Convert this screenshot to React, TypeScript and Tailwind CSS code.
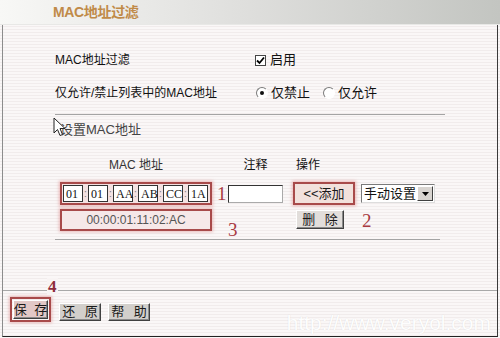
import type { ReactNode } from 'react';

const sans = "font-['Liberation_Sans','Noto_Sans_CJK_SC',sans-serif]";

function Btn({ children, className = '' }: { children: ReactNode; className?: string }) {
  return (
    <div
      className={`flex items-center justify-center whitespace-nowrap bg-[#d2cfcb] border border-t-white border-l-white border-r-[#404040] border-b-[#404040] shadow-[inset_-1px_-1px_0_#8a8a8a] text-[13px] text-[#1a1a1a] ${className}`}
    >
      {children}
    </div>
  );
}

function Radio({ checked }: { checked?: boolean }) {
  return (
    <div className="w-[12px] h-[12px] rounded-full bg-white border border-t-[#7a7a7a] border-l-[#7a7a7a] border-r-white border-b-white flex items-center justify-center">
      {checked && <div className="w-[4px] h-[4px] rounded-full bg-[#111]" />}
    </div>
  );
}

function Num({ n, className = '' }: { n: string; className?: string }) {
  return (
    <span className={`font-['Liberation_Serif',serif] text-[19px] leading-none text-[#a83a42] ${className}`}>{n}</span>
  );
}

const macParts = ['01', '01', 'AA', 'AB', 'CC', '1A'];

export default function App() {
  return (
    <div
      className={`w-[500px] h-[338px] overflow-hidden bg-[repeating-linear-gradient(180deg,#faf7f7_0px,#faf7f7_2px,#f1ecec_2px,#f1ecec_3px)] ${sans}`}
    >
      {/* Title bar */}
      <div className="h-[25px] flex items-center pl-[53px] bg-linear-to-r from-[#f8f8f6] via-[#dededc] to-[#c3c5c1] border-b border-[#e8e8e6]">
        <span className="text-[14px] font-bold text-[#c08a48] tracking-tight">MAC地址过滤</span>
      </div>

      {/* Body */}
      <div className="relative flex flex-col h-[312px] mx-[2px] border-l border-l-[#8c8c8c] border-r border-r-[#3a3a3a] border-b border-b-[#222] text-[12px] text-[#111]">
        {/* Row 1 */}
        <div className="mt-[25px] h-[20px] pl-[52px] flex items-center">
          <span className="w-[200px]">MAC地址过滤</span>
          <div className="w-[11px] h-[11px] bg-white border border-[#444] flex items-center justify-center">
            <svg width="9" height="9" viewBox="0 0 9 9">
              <path d="M1 4.5 L3.5 7 L8 1.5" fill="none" stroke="#000" strokeWidth="1.8" />
            </svg>
          </div>
          <span className="ml-[4px] text-[13px]">启用</span>
        </div>

        {/* Row 2 */}
        <div className="mt-[13px] h-[20px] pl-[52px] flex items-center">
          <span className="w-[201px]">仅允许/禁止列表中的MAC地址</span>
          <Radio checked />
          <span className="ml-[3px] text-[13px] w-[52px]">仅禁止</span>
          <Radio />
          <span className="ml-[3px] text-[13px]">仅允许</span>
        </div>

        <div className="mt-[11px] ml-[52px] w-[390px] h-px bg-[#a4a4a4]" />

        {/* Row 3 */}
        <div className="mt-[5px] h-[20px] pl-[57px] flex items-center text-[13px] text-[#444]">设置MAC地址</div>
        <svg className="absolute left-[50px] top-[92px]" width="13" height="20" viewBox="0 0 13 20">
          <path d="M1 1 L1 16 L4.5 12.5 L7 18.5 L9.5 17.5 L7 11.5 L12 11.5 Z" fill="#fff" stroke="#222" strokeWidth="1" />
        </svg>

        {/* Column headers */}
        <div className="mt-[17px] h-[16px] pl-[57px] flex items-center text-[12px]">
          <span className="w-[152px] text-center text-[#333]">MAC 地址</span>
          <span className="w-[16px]" />
          <span className="w-[55px] text-center">注释</span>
          <span className="ml-[13px]">操作</span>
        </div>

        {/* MAC input row */}
        <div className="mt-[9px] h-[23px] pl-[57px] flex items-center">
          <div className="w-[152px] h-[23px] border-2 border-[#a84a4a] bg-[#f4e2e2] shadow-[0_0_3px_1px_rgba(220,130,130,0.55)] flex items-center pl-[1px]">
            {macParts.map((p, i) => (
              <div key={i} className="flex items-center">
                {i > 0 && <span className="w-[5px] text-center text-[10px] text-[#777] leading-none">:</span>}
                <div className="w-[20px] h-[17px] bg-white border border-[#333] pl-[2px] flex items-center font-['Liberation_Serif',serif] text-[12px] text-[#111]">
                  {p}
                </div>
              </div>
            ))}
          </div>
          <Num n="1" className="ml-[5px] w-[11px]" />
          <div className="w-[55px] h-[18px] bg-white border border-[#333] border-b-[#aaa] border-r-[#aaa]" />
          <div className="ml-[10px] w-[62px] h-[23px] border-2 border-[#a84a4a] shadow-[0_0_3px_1px_rgba(220,130,130,0.55)] bg-[#f2e1dc] flex items-center justify-center text-[13px] text-[#1a1a1a]">
            &lt;&lt;添加
          </div>
          <div className="ml-[6px] w-[74px] h-[19px] bg-white border border-t-[#7a7a7a] border-l-[#7a7a7a] border-r-[#ddd] border-b-[#ddd] flex items-center">
            <span className="flex-1 pl-[2px] text-[13px] leading-none">手动设置</span>
            <div className="w-[16px] h-[15px] mr-px bg-[#d8d4d0] border border-t-white border-l-white border-r-[#404040] border-b-[#404040] flex items-center justify-center">
              <svg width="7" height="4" viewBox="0 0 7 4">
                <path d="M0 0 L7 0 L3.5 4 Z" fill="#000" />
              </svg>
            </div>
          </div>
        </div>

        {/* Result row */}
        <div className="mt-[4px] h-[22px] pl-[57px] flex items-start">
          <div className="w-[152px] h-[22px] border-2 border-[#a84a4a] bg-[#f6e8e8] shadow-[0_0_3px_1px_rgba(220,130,130,0.5)] flex items-center justify-center text-[12px] text-[#555]">
            00:00:01:11:02:AC
          </div>
          <Num n="3" className="ml-[16px] mt-[11px] w-[8px]" />
          <Btn className="ml-[60px] mt-[1px] w-[48px] h-[19px] bg-[#e2dedb] tracking-[3px] pl-[3px]">删 除</Btn>
          <Num n="2" className="ml-[18px] mt-[2px]" />
        </div>

        <div className="mt-[8px] ml-[52px] w-[385px] h-px bg-[#a4a4a4]" />

        {/* Bottom buttons */}
        <div className="relative mt-auto h-[46px] border-t border-[#a8a8a8]">
          <span className="absolute left-[44px] top-[-13px] px-[1px] font-['Liberation_Serif',serif] text-[17px] font-bold leading-none text-[#8e2c3c] bg-[#f8f4f4]">
            4
          </span>
          <div className="flex items-center pt-[6px] pl-[7px]">
            <div className="w-[41px] h-[25px] border-2 border-[#a84a4a] shadow-[0_0_3px_1px_rgba(220,130,130,0.5)] flex items-end p-px">
              <Btn className="w-full h-[19px] bg-[#e2c8c6] tracking-[2px] pl-[2px]">保 存</Btn>
            </div>
            <Btn className="ml-[8px] mt-[4px] w-[42px] h-[18px] tracking-[3px] pl-[3px]">还 原</Btn>
            <Btn className="ml-[7px] mt-[4px] w-[42px] h-[18px] tracking-[3px] pl-[3px]">帮 助</Btn>
          </div>
          <span className="absolute right-[6px] bottom-[3px] text-[21px] leading-none text-white opacity-90 [text-shadow:0_0_1px_rgba(0,0,0,0.12)]">
            http://www.veryol.com
          </span>
        </div>
      </div>
    </div>
  );
}
